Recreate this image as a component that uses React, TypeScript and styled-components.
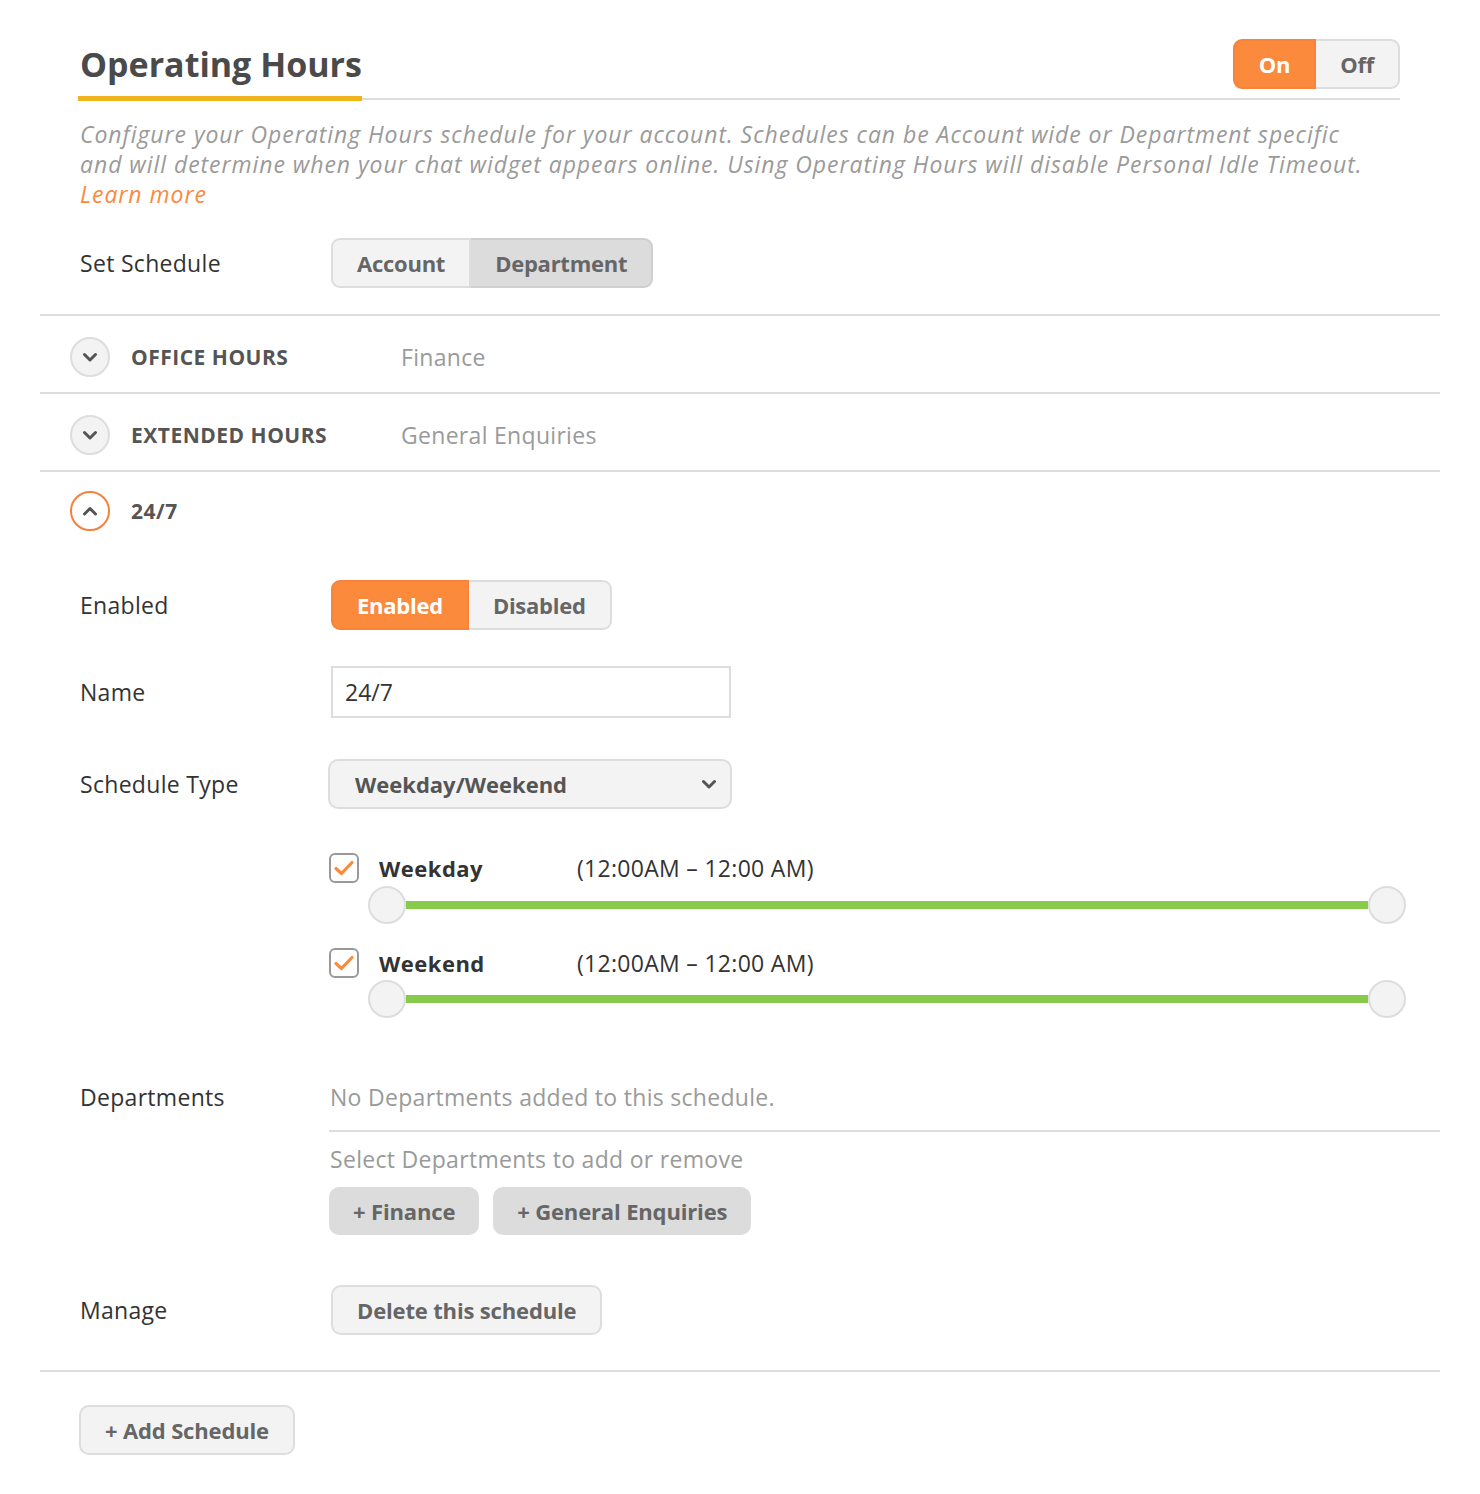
import styled, { createGlobalStyle } from "styled-components";

const GlobalStyle = createGlobalStyle`
  body {
    margin: 0;
    background: #fff;
    font-family: "Open Sans", "Liberation Sans", sans-serif;
    color: #333;
  }
  * { box-sizing: border-box; }
`;

const Page = styled.div`
  width: 1480px;
  padding: 0 40px 40px;
`;

const Intro = styled.section`
  padding: 39px 40px 26px;
  border-bottom: 2px solid #ddd;
`;

const HeaderRow = styled.div`
  display: flex;
  justify-content: space-between;
  align-items: flex-start;
  border-bottom: 2px solid #ddd;
`;

const Title = styled.h1`
  margin: 0 0 -3px -2px;
  padding: 0 0 7px 2px;
  font-size: 34px;
  line-height: 50px;
  font-weight: 700;
  color: #4a4a4a;
  border-bottom: 5px solid #f0b41c;
`;

const Description = styled.p`
  margin: 19px 0 0;
  font-size: 23px;
  line-height: 30px;
  letter-spacing: 0.95px;
  font-style: italic;
  color: #9a9a9a;
  white-space: nowrap;
`;

const LearnMore = styled.a`
  color: #fb8a3c;
  text-decoration: none;
`;

const Segmented = styled.div`
  display: inline-flex;
  height: 50px;
`;

const Segment = styled.button<{ $state?: "orange" | "gray" }>`
  height: 50px;
  padding: 0 24px;
  font-family: inherit;
  font-size: 22px;
  font-weight: 700;
  letter-spacing: -0.25px;
  border: 2px solid
    ${({ $state }) => ($state === "orange" ? "#f7843a" : $state === "gray" ? "#cfcfcf" : "#ddd")};
  background: ${({ $state }) => ($state === "orange" ? "#fb8a3c" : $state === "gray" ? "#dcdcdc" : "#f3f3f3")};
  color: ${({ $state }) => ($state === "orange" ? "#fff" : "#666")};

  &:first-child {
    border-radius: 9px 0 0 9px;
  }
  &:last-child {
    border-radius: 0 9px 9px 0;
  }
  & + & {
    border-left-width: 0;
  }
`;

const FormRow = styled.div<{ $mt: number; $align?: string }>`
  display: grid;
  grid-template-columns: 250px 1fr;
  align-items: ${({ $align }) => $align || "center"};
  margin-top: ${({ $mt }) => $mt}px;
`;

const Label = styled.div`
  font-size: 23px;
  line-height: 30px;
  letter-spacing: 0.3px;
  color: #333;
`;

const AccordionRow = styled.div<{ $pb: number }>`
  display: grid;
  grid-template-columns: 40px 249px 1fr;
  column-gap: 21px;
  align-items: center;
  padding: 21px 0 ${({ $pb }) => $pb}px 30px;
  border-bottom: 2px solid #ddd;
`;

const OpenAccordion = styled.div`
  border-bottom: 2px solid #ddd;
  padding: 0 0 35px 40px;
`;

const OpenHeader = styled.div`
  display: grid;
  grid-template-columns: 40px 1fr;
  column-gap: 21px;
  align-items: center;
  margin: 19px 0 0 -10px;
`;

const Circle = styled.div<{ $active?: boolean }>`
  width: 40px;
  height: 40px;
  border-radius: 50%;
  display: flex;
  align-items: center;
  justify-content: center;
  background: ${({ $active }) => ($active ? "#fff" : "#f3f3f3")};
  border: 2px solid ${({ $active }) => ($active ? "#f5823a" : "#ddd")};
`;

const SectionTitle = styled.div`
  font-size: 21px;
  line-height: 30px;
  font-weight: 700;
  color: #555;
  text-transform: uppercase;
  letter-spacing: 0.5px;
`;

const SectionValue = styled.div`
  font-size: 23px;
  line-height: 30px;
  letter-spacing: 0.3px;
  color: #9a9a9a;
`;

const TextInput = styled.input`
  width: 400px;
  height: 52px;
  padding: 0 12px;
  border: 2px solid #ddd;
  font-family: inherit;
  font-size: 23px;
  color: #333;
  outline: none;
`;

const SelectBox = styled.div`
  width: 404px;
  height: 50px;
  margin-left: -2px;
  padding: 0 13px 0 25px;
  display: flex;
  align-items: center;
  justify-content: space-between;
  background: #f3f3f3;
  border: 2px solid #ddd;
  border-radius: 10px;
  font-size: 22px;
  font-weight: 700;
  color: #555;
`;

const DayList = styled.div`
  margin-left: 250px;
`;

const DayLine = styled.div<{ $mt: number }>`
  display: grid;
  grid-template-columns: 30px 178px 1fr;
  column-gap: 20px;
  align-items: center;
  height: 30px;
  margin: ${({ $mt }) => $mt}px 0 0 -1px;
`;

const Checkbox = styled.div`
  width: 30px;
  height: 30px;
  border: 2px solid #999;
  border-radius: 6px;
  background: #fff;
  display: flex;
  align-items: center;
  justify-content: center;
`;

const DayName = styled.div`
  font-size: 22px;
  line-height: 30px;
  font-weight: 700;
  letter-spacing: 0.5px;
  color: #333;
`;

const DayRange = styled.div`
  font-size: 23px;
  line-height: 30px;
  letter-spacing: 0.3px;
  color: #333;
`;

const SliderRow = styled.div<{ $mt: number }>`
  display: flex;
  align-items: center;
  margin: ${({ $mt }) => $mt}px 34px 0 38px;
`;

const Thumb = styled.div`
  width: 38px;
  height: 38px;
  flex: none;
  border-radius: 50%;
  background: #f3f3f3;
  border: 2px solid #ddd;
`;

const Track = styled.div`
  flex: 1;
  height: 8px;
  background: #88cb4b;
`;

const Muted = styled.div`
  font-size: 23px;
  line-height: 30px;
  letter-spacing: 0.3px;
  color: #9a9a9a;
`;

const DeptDivider = styled.div`
  margin: 18px 0 12px -1px;
  border-top: 2px solid #ddd;
`;

const ButtonGroup = styled.div`
  display: flex;
  gap: 14px;
  margin: 13px 0 0 -1px;
`;

const Button = styled.button<{ $tone?: "solid" }>`
  height: ${({ $tone }) => ($tone === "solid" ? "48px" : "50px")};
  padding: 0 ${({ $tone }) => ($tone === "solid" ? "22px" : "24px")};
  font-family: inherit;
  font-size: 22px;
  font-weight: 700;
  letter-spacing: -0.15px;
  color: #666;
  border-radius: 10px;
  background: ${({ $tone }) => ($tone === "solid" ? "#dcdcdc" : "#f3f3f3")};
  border: 2px solid ${({ $tone }) => ($tone === "solid" ? "#dcdcdc" : "#ddd")};
`;

const Footer = styled.div`
  padding: 33px 0 0 39px;
`;

function Chevron({ up }: { up?: boolean }) {
  return (
    <svg width="16" height="10" viewBox="0 0 16 10">
      <path
        d={up ? "M2.5 8 L8 2.5 L13.5 8" : "M2.5 2.5 L8 8 L13.5 2.5"}
        fill="none"
        stroke="#555"
        strokeWidth="3"
        strokeLinecap="round"
        strokeLinejoin="round"
      />
    </svg>
  );
}

function Check() {
  return (
    <svg width="22" height="18" viewBox="0 0 22 18">
      <path
        d="M3 9.5 L8.5 14.5 L19 3.5"
        fill="none"
        stroke="#fb8a3c"
        strokeWidth="3.2"
        strokeLinecap="round"
        strokeLinejoin="round"
      />
    </svg>
  );
}

const schedules = [
  { title: "Office Hours", dept: "Finance", pb: 15 },
  { title: "Extended Hours", dept: "General Enquiries", pb: 15 },
];

const days = [
  { name: "Weekday", range: "(12:00AM – 12:00 AM)", mt: 44, smt: 3 },
  { name: "Weekend", range: "(12:00AM – 12:00 AM)", mt: 24, smt: 2 },
];

export default function App() {
  return (
    <>
      <GlobalStyle />
      <Page>
        <Intro>
          <HeaderRow>
            <Title>Operating Hours</Title>
            <Segmented>
              <Segment $state="orange">On</Segment>
              <Segment>Off</Segment>
            </Segmented>
          </HeaderRow>
          <Description>
            Configure your Operating Hours schedule for your account. Schedules can be Account wide or
            Department specific
            <br />
            and will determine when your chat widget appears online. Using Operating Hours will disable
            Personal Idle Timeout.
            <br />
            <LearnMore href="#">Learn more</LearnMore>
          </Description>
          <FormRow $mt={29} style={{ gridTemplateColumns: "251px 1fr" }}>
            <Label>Set Schedule</Label>
            <div>
              <Segmented>
                <Segment>Account</Segment>
                <Segment $state="gray">Department</Segment>
              </Segmented>
            </div>
          </FormRow>
        </Intro>

        {schedules.map((s) => (
          <AccordionRow key={s.title} $pb={s.pb}>
            <Circle>
              <Chevron />
            </Circle>
            <SectionTitle>{s.title}</SectionTitle>
            <SectionValue>{s.dept}</SectionValue>
          </AccordionRow>
        ))}

        <OpenAccordion>
          <OpenHeader>
            <Circle $active>
              <Chevron up />
            </Circle>
            <SectionTitle>24/7</SectionTitle>
          </OpenHeader>

          <FormRow $mt={49}>
            <Label>Enabled</Label>
            <div>
              <Segmented style={{ marginLeft: 1 }}>
                <Segment $state="orange">Enabled</Segment>
                <Segment>Disabled</Segment>
              </Segmented>
            </div>
          </FormRow>

          <FormRow $mt={36}>
            <Label>Name</Label>
            <div>
              <TextInput defaultValue="24/7" style={{ marginLeft: 1 }} />
            </div>
          </FormRow>

          <FormRow $mt={41}>
            <Label>Schedule Type</Label>
            <SelectBox>
              Weekday/Weekend
              <Chevron />
            </SelectBox>
          </FormRow>

          <DayList>
            {days.map((d) => (
              <div key={d.name}>
                <DayLine $mt={d.mt}>
                  <Checkbox>
                    <Check />
                  </Checkbox>
                  <DayName>{d.name}</DayName>
                  <DayRange>{d.range}</DayRange>
                </DayLine>
                <SliderRow $mt={d.smt}>
                  <Thumb />
                  <Track />
                  <Thumb />
                </SliderRow>
              </div>
            ))}
          </DayList>

          <FormRow $mt={64} $align="start">
            <Label>Departments</Label>
            <div>
              <Muted>No Departments added to this schedule.</Muted>
              <DeptDivider />
              <Muted>Select Departments to add or remove</Muted>
              <ButtonGroup>
                <Button $tone="solid">+ Finance</Button>
                <Button $tone="solid">+ General Enquiries</Button>
              </ButtonGroup>
            </div>
          </FormRow>

          <FormRow $mt={50}>
            <Label>Manage</Label>
            <div>
              <Button style={{ marginLeft: 1 }}>Delete this schedule</Button>
            </div>
          </FormRow>
        </OpenAccordion>

        <Footer>
          <Button>+ Add Schedule</Button>
        </Footer>
      </Page>
    </>
  );
}
